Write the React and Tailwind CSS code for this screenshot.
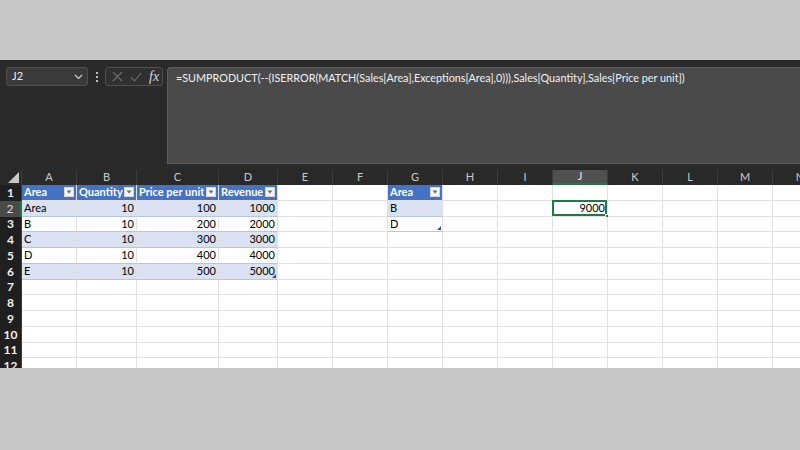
import React from "react";

const COLS = [
  { k: "A", w: "w-[55px]" },
  { k: "B", w: "w-[60px]" },
  { k: "C", w: "w-[82px]" },
  { k: "D", w: "w-[59px]" },
  { k: "E", w: "w-[55px]" },
  { k: "F", w: "w-[55px]" },
  { k: "G", w: "w-[55px]" },
  { k: "H", w: "w-[55px]" },
  { k: "I", w: "w-[55px]" },
  { k: "J", w: "w-[55px]" },
  { k: "K", w: "w-[55px]" },
  { k: "L", w: "w-[55px]" },
  { k: "M", w: "w-[55px]" },
  { k: "N", w: "w-[55px]" },
];

const sales = [
  ["Area", 10, 100, 1000],
  ["B", 10, 200, 2000],
  ["C", 10, 300, 3000],
  ["D", 10, 400, 4000],
  ["E", 10, 500, 5000],
];

const FilterBtn = () => (
  <span className="ml-auto flex h-[10px] w-[10px] shrink-0 items-center justify-center border border-[#d6d6d6] bg-[#f5f5f5]">
    <svg width="6" height="4" viewBox="0 0 6 4">
      <path d="M0.5 0.5 L5.5 0.5 L3 3.5 Z" fill="#6a6a6a" />
    </svg>
  </span>
);

const Corner = () => (
  <svg className="absolute bottom-[1px] right-[1px]" width="4" height="4" viewBox="0 0 4 4">
    <path d="M4 0 L4 4 L0 4 Z" fill="#2f5597" />
  </svg>
);

function cellContent(r, c) {
  const idx = "ABCD".indexOf(c);
  if (idx >= 0 && r <= 6) {
    if (r === 1) {
      const heads = ["Area", "Quantity", "Price per unit", "Revenue"];
      return {
        bg: "bg-[#4472c4] text-white font-bold",
        node: (
          <>
            <span className="truncate">{heads[idx]}</span>
            <FilterBtn />
          </>
        ),
      };
    }
    const v = sales[r - 2][idx];
    return {
      bg: (r % 2 === 0 ? "bg-[#d9e1f2]" : "bg-white") + " border-b-[#b4c6e7]",
      node: <span className={idx === 0 ? "" : "ml-auto"}>{v}</span>,
      corner: r === 6 && c === "D",
    };
  }
  if (c === "G" && r <= 3) {
    if (r === 1)
      return {
        bg: "bg-[#4472c4] text-white font-bold",
        node: (
          <>
            <span>Area</span>
            <FilterBtn />
          </>
        ),
      };
    return {
      bg: (r === 2 ? "bg-[#d9e1f2]" : "bg-white") + " border-b-[#b4c6e7]",
      node: <span>{r === 2 ? "B" : "D"}</span>,
      corner: r === 3,
    };
  }
  if (c === "J" && r === 2) {
    return { bg: "bg-white", node: <span className="ml-auto">9000</span>, selected: true };
  }
  return { bg: "bg-white", node: null };
}

export default function App() {
  const rows = Array.from({ length: 12 }, (_, i) => i + 1);
  return (
    <div
      className="flex h-[450px] w-[800px] flex-col overflow-hidden bg-[#c8c8c8]"
      style={{ fontFamily: "Lato, 'Liberation Sans', sans-serif" }}
    >
      <div className="h-[60px] shrink-0" />
      <div className="flex h-[308px] shrink-0 flex-col overflow-hidden bg-[#2a2a2a]">
        {/* formula bar */}
        <div className="flex h-[110px] shrink-0 items-start pt-[7px] pl-[6px]">
          <div className="flex h-[19px] w-[82px] items-center rounded-[3px] border border-[#505050] bg-[#3a3a3a] pl-[5px] pr-[4px] text-[11px] text-[#f0f0f0]">
            <span>J2</span>
            <svg className="ml-auto" width="9" height="6" viewBox="0 0 9 6">
              <path d="M1 1 L4.5 4.5 L8 1" stroke="#d0d0d0" strokeWidth="1.2" fill="none" />
            </svg>
          </div>
          <div className="flex h-[19px] w-[17px] flex-col items-center justify-center gap-[2px]">
            <span className="h-[2px] w-[2px] bg-[#bdbdbd]" />
            <span className="h-[2px] w-[2px] bg-[#bdbdbd]" />
            <span className="h-[2px] w-[2px] bg-[#bdbdbd]" />
          </div>
          <div className="flex h-[19px] w-[58px] items-center gap-[7px] rounded-[3px] border border-[#505050] bg-[#303030] pl-[6px]">
            <svg width="11" height="11" viewBox="0 0 11 11">
              <path d="M1 1 L10 10 M10 1 L1 10" stroke="#6e6e6e" strokeWidth="1.1" />
            </svg>
            <svg width="12" height="10" viewBox="0 0 12 10">
              <path d="M1 5.5 L4.5 9 L11 1" stroke="#6e6e6e" strokeWidth="1.1" fill="none" />
            </svg>
            <span
              className="text-[14px] italic leading-none text-[#d8d8d8]"
              style={{ fontFamily: "'Liberation Serif', serif" }}
            >
              fx
            </span>
          </div>
          <div className="ml-[4px] flex h-[97px] flex-1 rounded-tl-[4px] border border-r-0 border-[#5c5c5c] bg-[#4a4a4a] pl-[8px] pt-[2px] text-[10.8px] leading-[16px] text-[#f2f2f2]">
            =SUMPRODUCT(--(ISERROR(MATCH(Sales[Area],Exceptions[Area],0))),Sales[Quantity],Sales[Price per unit])
          </div>
        </div>
        {/* grid */}
        <div className="flex flex-col text-[11px]">
          <div className="flex h-[15px] shrink-0 bg-[#292929]">
            <div className="relative w-[22px] shrink-0 border-r border-[#3c3c3c]">
              <svg className="absolute bottom-[2px] right-[2px]" width="11" height="11" viewBox="0 0 11 11">
                <path d="M11 0 L11 11 L0 11 Z" fill="#c8c8c8" />
              </svg>
            </div>
            {COLS.map((col) => (
              <div
                key={col.k}
                className={`${col.w} flex shrink-0 items-center justify-center border-r ${
                  col.k === "J"
                    ? "border-[#3c3c3c] bg-[#505050] border-b-2 border-b-[#1f7a45] text-[#e6e6e6]"
                    : "border-[#3c3c3c] text-[#c9c9c9]"
                }`}
              >
                {col.k}
              </div>
            ))}
          </div>
          {rows.map((r) => (
            <div key={r} className="flex h-[15.75px] shrink-0">
              <div
                className={`flex w-[22px] shrink-0 items-center justify-center text-[12px] ${
                  r === 2
                    ? "border-r-2 border-[#1f7a45] bg-[#4a4a4a] text-[#dcdcdc]"
                    : "border-r border-[#3c3c3c] bg-[#1f1f1f] font-bold text-[#f0f0f0]"
                }`}
              >
                {r}
              </div>
              {COLS.map((col) => {
                const cell = cellContent(r, col.k);
                return (
                  <div
                    key={col.k}
                    className={`${col.w} relative flex shrink-0 items-center whitespace-nowrap border-b border-r border-[#e1e1e1] px-[2px] text-black ${cell.bg}`}
                  >
                    {cell.node}
                    {cell.corner && <Corner />}
                    {cell.selected && (
                      <>
                        <span className="pointer-events-none absolute -left-[1px] -top-[1px] h-[calc(100%+1px)] w-[calc(100%+1px)] border-2 border-[#1f7a45]" />
                        <span className="absolute -bottom-[3px] -right-[3px] h-[5px] w-[5px] border border-white bg-[#1f7a45]" />
                      </>
                    )}
                  </div>
                );
              })}
            </div>
          ))}
        </div>
      </div>
    </div>
  );
}
